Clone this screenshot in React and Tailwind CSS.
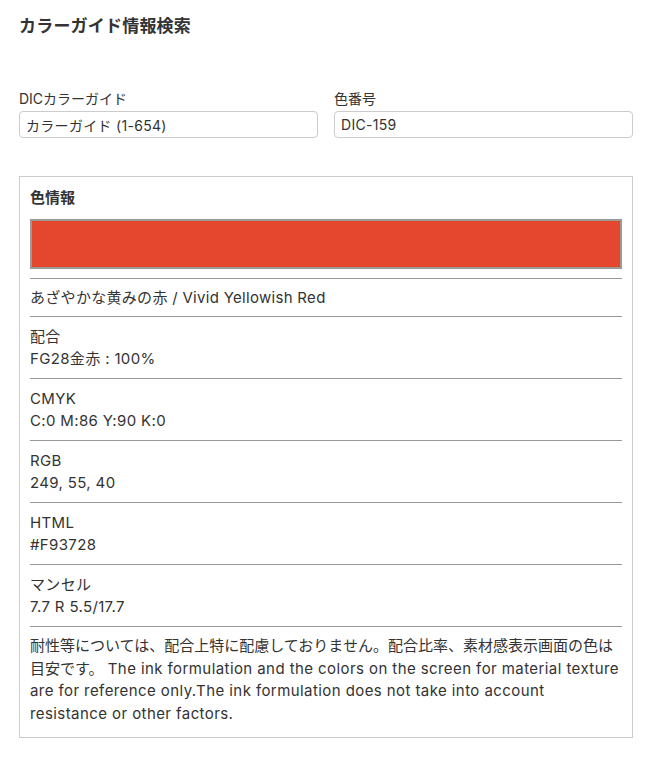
import { useState } from "react";

/* ───────── Data ───────── */

const DETAILS = [
  { label: "配合", value: "FG28金赤 : 100%" },
  { label: "CMYK", value: "C:0 M:86 Y:90 K:0" },
  { label: "RGB", value: "249, 55, 40" },
  { label: "HTML", value: "#F93728" },
  { label: "マンセル", value: "7.7 R 5.5/17.7" },
];

const FONT = { fontFamily: '"Inter", "Noto Sans CJK JP", sans-serif' };

/* ───────── Field ───────── */

const Field = ({ label, value, onChange }) => (
  <label className="flex flex-col">
    <span className="text-[14px] leading-[20px] text-[#333]">{label}</span>
    <input
      value={value}
      onChange={(e) => onChange(e.target.value)}
      className="mt-[2px] h-[27px] w-full rounded-[4px] border border-[#ccc] bg-white px-[6px] text-[14px] tracking-[0.3px] text-[#333] outline-none"
    />
  </label>
);

/* ───────── App ───────── */

const App = () => {
  const [guide, setGuide] = useState("カラーガイド (1-654)");
  const [code, setCode] = useState("DIC-159");

  return (
    <div style={FONT} className="min-h-screen bg-white text-[#333]">
      <div className="w-[614px] ml-[19px] pt-[14px] pb-10">
        <h1 className="text-[17px] leading-[24px] font-bold tracking-[0.2px] text-[#333]">
          カラーガイド情報検索
        </h1>

        {/* Search */}
        <div className="mt-[51px] grid grid-cols-2 gap-4">
          <Field label="DICカラーガイド" value={guide} onChange={setGuide} />
          <Field label="色番号" value={code} onChange={setCode} />
        </div>

        {/* Color info */}
        <section className="mt-[38px] border border-[#ccc] px-[10px] pt-[10px] pb-[12px]">
          <h2 className="text-[15px] leading-[22px] font-bold">色情報</h2>

          <div className="mt-[10px] pb-[9px] border-b border-[#999]">
            <div className="h-[50px] border-2 border-[#999] bg-[#e4472e]" />
          </div>

          <p className="py-[7.5px] text-[15px] leading-[22px] tracking-[0.3px] border-b border-[#999]">
            あざやかな黄みの赤 / Vivid Yellowish Red
          </p>

          {DETAILS.map(({ label, value }) => (
            <div
              key={label}
              className="py-[8.5px] text-[15px] leading-[22px] tracking-[0.35px] border-b border-[#999]"
            >
              <p>{label}</p>
              <p>{value}</p>
            </div>
          ))}

          <p className="pt-2 text-[15px] leading-[22.5px]">
            耐性等については、配合上特に配慮しておりません。配合比率、素材感表示画面の色は目安です。{" "}
            <span className="tracking-[0.42px]">
              The ink formulation and the colors on the screen for material texture are for reference only.The ink formulation does not take into account resistance or other factors.
            </span>
          </p>
        </section>
      </div>
    </div>
  );
};

export default App;
